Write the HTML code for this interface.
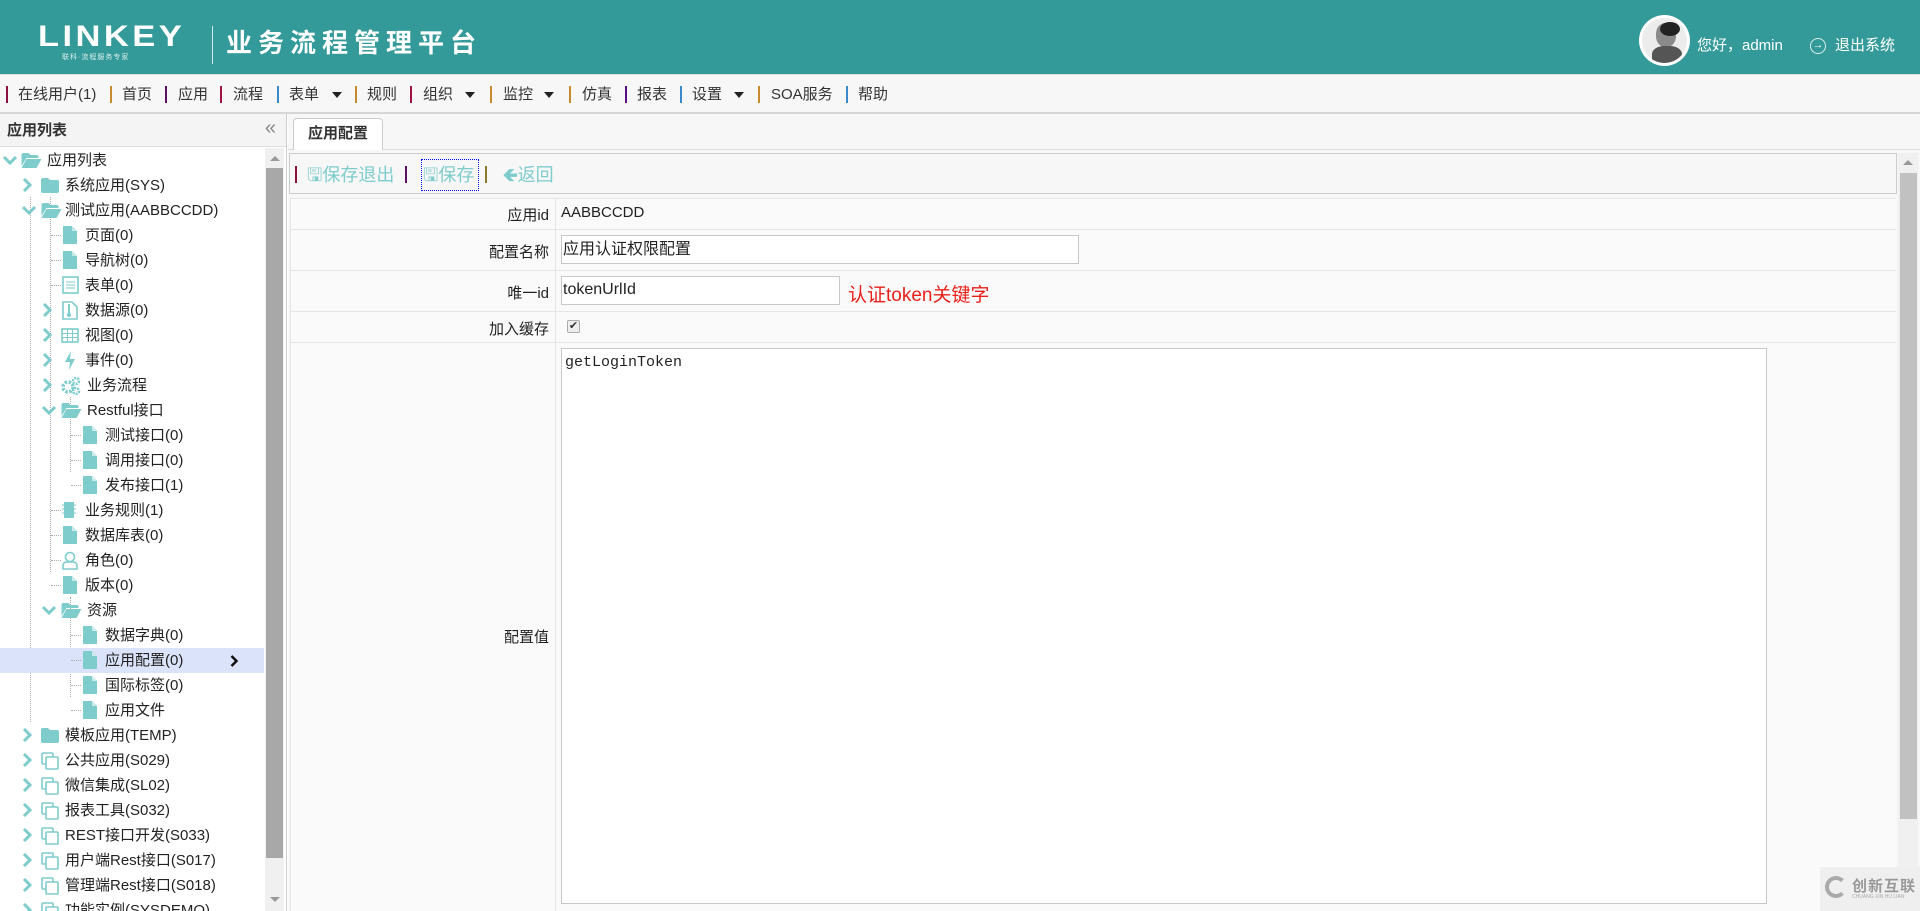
<!DOCTYPE html>
<html><head><meta charset="utf-8">
<style>
*{margin:0;padding:0;box-sizing:border-box}
body{width:1920px;height:911px;overflow:hidden;background:#fff;font-family:"Liberation Sans","Noto Sans CJK SC",sans-serif;color:#222;position:relative}
.abs{position:absolute}
#hdr{left:0;top:0;width:1920px;height:74px;background:#349a99}
#menu{left:0;top:74px;width:1920px;height:40px;background:#f7f7f7;border-top:1px solid #ddd;border-bottom:2px solid #d6d6d6}
.mi{position:absolute;top:10px;font-size:15px;color:#333;line-height:20px}
.sep{position:absolute;top:11px;width:2px;height:17px}
.car{position:absolute;top:17px;width:0;height:0;border-left:5px solid transparent;border-right:5px solid transparent;border-top:6px solid #222}
#side{left:0;top:114px;width:287px;height:797px;background:#fff;border-right:1px solid #ccc}
#sh{left:0;top:0;width:286px;height:33px;background:#f4f4f4;border-bottom:1px solid #ddd;font-weight:bold;font-size:15px;line-height:33px;padding-left:7px;color:#333}
.r{position:absolute;left:0;width:264px;height:25px;font-size:15px;line-height:25px;white-space:nowrap;color:#222}
.r span{position:absolute;top:0}
.r svg{position:absolute}
.vl{position:absolute;width:0;border-left:1px dotted #aaa}
.hl{position:absolute;height:0;width:10px;border-top:1px dotted #aaa;top:12px}
.lbl{position:absolute;left:290px;width:259px;text-align:right;font-size:15px;color:#222}
.tb{color:#7ecccc;font-size:18px;position:absolute;top:161px}
</style></head><body>
<svg width="0" height="0" style="position:absolute">
<defs>
<symbol id="file" viewBox="0 0 16 18"><path d="M1 0h9l5 5v13H1z" fill="#7ecccc"/><path d="M10 0v5h5" fill="#c8eaea"/></symbol>
<symbol id="fold" viewBox="0 0 18 15"><path d="M0 2q0-2 2-2h5l2 2h7q2 0 2 2v9q0 2-2 2H2q-2 0-2-2z" fill="#7ecccc"/></symbol>
<symbol id="ofold" viewBox="0 0 20 15"><path d="M0 2q0-2 2-2h5l2 2h6q2 0 2 2v1H5L0 13z" fill="#7ecccc"/><path d="M5 6h15l-5 9H0z" fill="#7ecccc"/></symbol>
<symbol id="copy" viewBox="0 0 18 18"><rect x="1" y="1" width="11" height="11" rx="1" fill="none" stroke="#7ecccc" stroke-width="1.6"/><rect x="5" y="5" width="12" height="12" rx="1" fill="#fff" stroke="#7ecccc" stroke-width="1.6"/></symbol>
<symbol id="chr" viewBox="0 0 10 14"><path d="M2 1l6 6-6 6" fill="none" stroke="#7ecccc" stroke-width="3"/></symbol>
<symbol id="chd" viewBox="0 0 14 10"><path d="M1 2l6 6 6-6" fill="none" stroke="#7ecccc" stroke-width="3"/></symbol>
</defs></svg>

<div id="hdr" class="abs">
  <div class="abs" style="left:38px;top:22px;color:#fff;font-size:30px;font-weight:bold;letter-spacing:3px;font-family:'Liberation Sans',sans-serif;transform:scaleX(1.15);transform-origin:left;line-height:30px">LINKEY</div>
  <div class="abs" style="left:62px;top:52px;color:#d8efef;font-size:7px;letter-spacing:1px">联科·流程服务专家</div>
  <div class="abs" style="left:212px;top:26px;width:1px;height:38px;background:#cfe9e9"></div>
  <div class="abs" style="left:226px;top:27px;color:#fff;font-size:26px;font-weight:bold;letter-spacing:6px;line-height:32px">业务流程管理平台</div>
  <div class="abs" style="left:1639px;top:15px;width:51px;height:51px;border-radius:50%;background:#fff;padding:3px"><div style="width:45px;height:45px;border-radius:50%;overflow:hidden;background:#ececec;position:relative"><div style="position:absolute;left:14px;top:5px;width:20px;height:24px;border-radius:45%;background:#8a8a8a"></div><div style="position:absolute;left:18px;top:4px;width:20px;height:14px;border-radius:50%;background:#222"></div><div style="position:absolute;left:10px;top:28px;width:30px;height:20px;border-radius:40% 40% 0 0;background:#555"></div></div></div>
  <div class="abs" style="left:1697px;top:34px;color:#fff;font-size:15px">您好，admin</div>
  <div class="abs" style="left:1810px;top:38px;width:16px;height:16px;border:1.5px solid #d8efef;border-radius:50%;color:#fff;font-size:11px;line-height:12px;text-align:center">→</div>
  <div class="abs" style="left:1835px;top:34px;color:#fff;font-size:15px">退出系统</div>
</div>

<div id="menu" class="abs">
  <div class="sep" style="left:6px;background:#8a1040"></div><div class="mi" style="left:18px">在线用户(1)</div>
  <div class="sep" style="left:110px;background:#c88a30"></div><div class="mi" style="left:122px">首页</div>
  <div class="sep" style="left:165px;background:#5a1060"></div><div class="mi" style="left:178px">应用</div>
  <div class="sep" style="left:220px;background:#a01040"></div><div class="mi" style="left:233px">流程</div>
  <div class="sep" style="left:277px;background:#3a8ac8"></div><div class="mi" style="left:289px">表单</div><div class="car" style="left:332px"></div>
  <div class="sep" style="left:355px;background:#c88a30"></div><div class="mi" style="left:367px">规则</div>
  <div class="sep" style="left:410px;background:#a01040"></div><div class="mi" style="left:423px">组织</div><div class="car" style="left:465px"></div>
  <div class="sep" style="left:490px;background:#c88a30"></div><div class="mi" style="left:503px">监控</div><div class="car" style="left:544px"></div>
  <div class="sep" style="left:569px;background:#c88a30"></div><div class="mi" style="left:582px">仿真</div>
  <div class="sep" style="left:625px;background:#5a1080"></div><div class="mi" style="left:637px">报表</div>
  <div class="sep" style="left:680px;background:#3a8ac8"></div><div class="mi" style="left:692px">设置</div><div class="car" style="left:734px"></div>
  <div class="sep" style="left:758px;background:#c88a30"></div><div class="mi" style="left:771px">SOA服务</div>
  <div class="sep" style="left:846px;background:#3a8ac8"></div><div class="mi" style="left:858px">帮助</div>
</div>

<div id="side" class="abs">
  <div id="sh" class="abs">应用列表<span style="position:absolute;right:10px;top:-2px;color:#888;font-weight:normal;font-size:20px">«</span></div>
</div>
<div class="abs" style="left:0;top:147px;width:287px;height:764px;overflow:hidden">
<div class="abs" style="left:0;top:0;width:287px;height:800px">
<div class="vl" style="left:30px;top:50px;height:525px"></div>
<div class="vl" style="left:50px;top:50px;height:375px"></div>
<div class="vl" style="left:70px;top:250px;height:75px"></div>
<div class="vl" style="left:70px;top:450px;height:100px"></div>
</div>
</div>
<div class="abs" style="left:0;top:0;width:264px;height:911px;overflow:hidden">
<div class="r" style="top:148px"><svg style="left:3px;top:7px" width="14" height="10"><use href="#chd"/></svg><svg style="left:21px;top:5px" width="21" height="15"><use href="#ofold"/></svg><span style="left:47px">应用列表</span></div>
<div class="r" style="top:173px"><svg style="left:22px;top:5px" width="10" height="14"><use href="#chr"/></svg><svg style="left:41px;top:5px" width="18" height="15"><use href="#fold"/></svg><span style="left:65px">系统应用(SYS)</span></div>
<div class="r" style="top:198px"><svg style="left:22px;top:7px" width="14" height="10"><use href="#chd"/></svg><svg style="left:41px;top:5px" width="21" height="15"><use href="#ofold"/></svg><span style="left:65px">测试应用(AABBCCDD)</span></div>
<div class="r" style="top:223px"><div class="hl" style="left:51px"></div><svg style="left:62px;top:3px" width="16" height="18"><use href="#file"/></svg><span style="left:85px">页面(0)</span></div>
<div class="r" style="top:248px"><div class="hl" style="left:51px"></div><svg style="left:62px;top:3px" width="16" height="18"><use href="#file"/></svg><span style="left:85px">导航树(0)</span></div>
<div class="r" style="top:273px"><div class="hl" style="left:51px"></div><svg style="left:62px;top:3px" width="17" height="18"><rect x="1" y="1" width="15" height="16" fill="none" stroke="#7ecccc" stroke-width="1.6"/><path d="M4 6h9M4 9h9M4 12h9" stroke="#7ecccc"/></svg><span style="left:85px">表单(0)</span></div>
<div class="r" style="top:298px"><svg style="left:42px;top:5px" width="10" height="14"><use href="#chr"/></svg><svg style="left:62px;top:3px" width="16" height="19"><path d="M1 1h9l5 5v12H1z" fill="none" stroke="#7ecccc" stroke-width="1.6"/><path d="M7 3v10" stroke="#7ecccc" stroke-width="2"/><circle cx="7" cy="14" r="2" fill="#7ecccc"/></svg><span style="left:85px">数据源(0)</span></div>
<div class="r" style="top:323px"><svg style="left:42px;top:5px" width="10" height="14"><use href="#chr"/></svg><svg style="left:61px;top:5px" width="18" height="15"><rect x="1" y="1" width="16" height="13" fill="none" stroke="#7ecccc" stroke-width="1.6"/><path d="M1 5.5h16M1 9.5h16M6.5 1v13M11.5 1v13" stroke="#7ecccc"/></svg><span style="left:85px">视图(0)</span></div>
<div class="r" style="top:348px"><svg style="left:42px;top:5px" width="10" height="14"><use href="#chr"/></svg><svg style="left:64px;top:3px" width="12" height="19"><path d="M7 0L1 11h5l-1 8 6-11H6z" fill="#7ecccc"/></svg><span style="left:85px">事件(0)</span></div>
<div class="r" style="top:373px"><svg style="left:42px;top:5px" width="10" height="14"><use href="#chr"/></svg><svg style="left:61px;top:3px" width="20" height="19"><circle cx="7" cy="11" r="5" fill="none" stroke="#7ecccc" stroke-width="3.5" stroke-dasharray="2.5 1.5"/><circle cx="15" cy="5" r="3" fill="none" stroke="#7ecccc" stroke-width="2.5" stroke-dasharray="2 1"/><circle cx="15" cy="15" r="3" fill="none" stroke="#7ecccc" stroke-width="2.5" stroke-dasharray="2 1"/></svg><span style="left:87px">业务流程</span></div>
<div class="r" style="top:398px"><svg style="left:42px;top:7px" width="14" height="10"><use href="#chd"/></svg><svg style="left:61px;top:5px" width="21" height="15"><use href="#ofold"/></svg><span style="left:87px">Restful接口</span></div>
<div class="r" style="top:423px"><div class="hl" style="left:71px"></div><svg style="left:82px;top:3px" width="16" height="18"><use href="#file"/></svg><span style="left:105px">测试接口(0)</span></div>
<div class="r" style="top:448px"><div class="hl" style="left:71px"></div><svg style="left:82px;top:3px" width="16" height="18"><use href="#file"/></svg><span style="left:105px">调用接口(0)</span></div>
<div class="r" style="top:473px"><div class="hl" style="left:71px"></div><svg style="left:82px;top:3px" width="16" height="18"><use href="#file"/></svg><span style="left:105px">发布接口(1)</span></div>
<div class="r" style="top:498px"><div class="hl" style="left:51px"></div><svg style="left:62px;top:3px" width="14" height="18"><rect x="2" y="1" width="10" height="16" fill="#7ecccc"/><path d="M0 4h2M0 8h2M0 12h2M12 4h2M12 8h2M12 12h2" stroke="#7ecccc"/></svg><span style="left:85px">业务规则(1)</span></div>
<div class="r" style="top:523px"><div class="hl" style="left:51px"></div><svg style="left:62px;top:3px" width="16" height="18"><use href="#file"/></svg><span style="left:85px">数据库表(0)</span></div>
<div class="r" style="top:548px"><div class="hl" style="left:51px"></div><svg style="left:62px;top:3px" width="16" height="19"><circle cx="8" cy="6" r="4.5" fill="none" stroke="#7ecccc" stroke-width="1.6"/><path d="M1 18v-3q0-4 4-4h6q4 0 4 4v3z" fill="none" stroke="#7ecccc" stroke-width="1.6"/></svg><span style="left:85px">角色(0)</span></div>
<div class="r" style="top:573px"><div class="hl" style="left:51px"></div><svg style="left:62px;top:3px" width="16" height="18"><use href="#file"/></svg><span style="left:85px">版本(0)</span></div>
<div class="r" style="top:598px"><svg style="left:42px;top:7px" width="14" height="10"><use href="#chd"/></svg><svg style="left:61px;top:5px" width="21" height="15"><use href="#ofold"/></svg><span style="left:87px">资源</span></div>
<div class="r" style="top:623px"><div class="hl" style="left:71px"></div><svg style="left:82px;top:3px" width="16" height="18"><use href="#file"/></svg><span style="left:105px">数据字典(0)</span></div>
<div class="r" style="top:648px;background:#dbe3fa"><div class="hl" style="left:71px"></div><svg style="left:82px;top:3px" width="16" height="18"><use href="#file"/></svg><span style="left:105px">应用配置(0)</span><svg style="left:230px;top:7px" width="9" height="12"><path d="M1.5 1l5 5-5 5" fill="none" stroke="#111" stroke-width="2.5"/></svg></div>
<div class="r" style="top:673px"><div class="hl" style="left:71px"></div><svg style="left:82px;top:3px" width="16" height="18"><use href="#file"/></svg><span style="left:105px">国际标签(0)</span></div>
<div class="r" style="top:698px"><div class="hl" style="left:71px"></div><svg style="left:82px;top:3px" width="16" height="18"><use href="#file"/></svg><span style="left:105px">应用文件</span></div>
<div class="r" style="top:723px"><svg style="left:22px;top:5px" width="10" height="14"><use href="#chr"/></svg><svg style="left:41px;top:5px" width="18" height="15"><use href="#fold"/></svg><span style="left:65px">模板应用(TEMP)</span></div>
<div class="r" style="top:748px"><svg style="left:22px;top:5px" width="10" height="14"><use href="#chr"/></svg><svg style="left:41px;top:4px" width="18" height="18"><use href="#copy"/></svg><span style="left:65px">公共应用(S029)</span></div>
<div class="r" style="top:773px"><svg style="left:22px;top:5px" width="10" height="14"><use href="#chr"/></svg><svg style="left:41px;top:4px" width="18" height="18"><use href="#copy"/></svg><span style="left:65px">微信集成(SL02)</span></div>
<div class="r" style="top:798px"><svg style="left:22px;top:5px" width="10" height="14"><use href="#chr"/></svg><svg style="left:41px;top:4px" width="18" height="18"><use href="#copy"/></svg><span style="left:65px">报表工具(S032)</span></div>
<div class="r" style="top:823px"><svg style="left:22px;top:5px" width="10" height="14"><use href="#chr"/></svg><svg style="left:41px;top:4px" width="18" height="18"><use href="#copy"/></svg><span style="left:65px">REST接口开发(S033)</span></div>
<div class="r" style="top:848px"><svg style="left:22px;top:5px" width="10" height="14"><use href="#chr"/></svg><svg style="left:41px;top:4px" width="18" height="18"><use href="#copy"/></svg><span style="left:65px">用户端Rest接口(S017)</span></div>
<div class="r" style="top:873px"><svg style="left:22px;top:5px" width="10" height="14"><use href="#chr"/></svg><svg style="left:41px;top:4px" width="18" height="18"><use href="#copy"/></svg><span style="left:65px">管理端Rest接口(S018)</span></div>
<div class="r" style="top:898px"><svg style="left:22px;top:5px" width="10" height="14"><use href="#chr"/></svg><svg style="left:41px;top:4px" width="18" height="18"><use href="#copy"/></svg><span style="left:65px">功能实例(SYSDEMO)</span></div>
</div>
<div class="abs" style="left:265px;top:148px;width:19px;height:763px;background:#f0f0f0"></div>
<div class="abs" style="left:270px;top:156px;width:0;height:0;border-left:5px solid transparent;border-right:5px solid transparent;border-bottom:5px solid #999"></div>
<div class="abs" style="left:266px;top:168px;width:17px;height:690px;background:#a8a8a8"></div>
<div class="abs" style="left:270px;top:897px;width:0;height:0;border-left:5px solid transparent;border-right:5px solid transparent;border-top:5px solid #999"></div>

<div class="abs" style="left:288px;top:114px;width:1632px;height:797px;background:#f7f7f7"></div>
<div class="abs" style="left:288px;top:149px;width:1632px;height:1px;background:#ddd"></div>
<div class="abs" style="left:293px;top:118px;width:90px;height:32px;background:#fff;border:1px solid #ccc;border-bottom:none;border-radius:4px 4px 0 0;font-weight:bold;font-size:15px;line-height:30px;text-align:center;color:#333">应用配置</div>
<div class="abs" style="left:289px;top:153px;width:1608px;height:41px;background:#f7f7f7;border:1px solid #ccc"></div>
<div class="abs" style="left:295px;top:166px;width:2px;height:17px;background:#8a1040"></div>
<div class="tb" style="left:307px">🖫保存退出</div>
<div class="abs" style="left:405px;top:166px;width:2px;height:17px;background:#5a1060"></div>
<div class="abs" style="left:421px;top:159px;width:58px;height:32px;border:1px dotted #00f"></div>
<div class="tb" style="left:423px">🖫保存</div>
<div class="abs" style="left:485px;top:166px;width:2px;height:17px;background:#8a7a30"></div>
<div class="tb" style="left:503px"><span style="font-weight:bold">🡸</span>返回</div>

<div class="abs" style="left:290px;top:198px;width:1606px;height:713px;background:#fafafa;border-top:1px solid #e5e5e5;border-left:1px solid #e5e5e5"></div>
<div class="abs" style="left:555px;top:198px;width:1px;height:713px;background:#e5e5e5"></div>
<div class="abs" style="left:290px;top:229px;width:1606px;height:1px;background:#e5e5e5"></div>
<div class="abs" style="left:290px;top:270px;width:1606px;height:1px;background:#e5e5e5"></div>
<div class="abs" style="left:290px;top:311px;width:1606px;height:1px;background:#e5e5e5"></div>
<div class="abs" style="left:290px;top:342px;width:1606px;height:1px;background:#e5e5e5"></div>
<div class="lbl" style="top:204px">应用id</div>
<div class="abs" style="left:561px;top:204px;font-size:15px">AABBCCDD</div>
<div class="lbl" style="top:241px">配置名称</div>
<div class="abs" style="left:561px;top:235px;width:518px;height:29px;background:#fff;border:1px solid #c8c8c8;font-size:16px;line-height:27px;padding-left:1px">应用认证权限配置</div>
<div class="lbl" style="top:282px">唯一id</div>
<div class="abs" style="left:561px;top:276px;width:279px;height:29px;background:#fff;border:1px solid #c8c8c8;font-size:16px;line-height:25px;padding-left:1px">tokenUrlId</div>
<div class="abs" style="left:848px;top:280px;font-size:19px;color:#e8201a">认证token关键字</div>
<div class="lbl" style="top:318px">加入缓存</div>
<div class="abs" style="left:567px;top:320px;width:13px;height:13px;border:1px solid #aaa;border-radius:2px;background:#eee;font-size:11px;line-height:11px;text-align:center;color:#333">✔</div>
<div class="lbl" style="top:626px">配置值</div>
<div class="abs" style="left:561px;top:348px;width:1206px;height:556px;background:#fff;border:1px solid #c8c8c8;font-family:'Liberation Mono',monospace;font-size:15px;padding:5px 3px">getLoginToken</div>

<div class="abs" style="left:1898px;top:153px;width:20px;height:758px;background:#f0f0f0"></div>
<div class="abs" style="left:1903px;top:160px;width:0;height:0;border-left:5px solid transparent;border-right:5px solid transparent;border-bottom:5px solid #999"></div>
<div class="abs" style="left:1900px;top:173px;width:17px;height:646px;background:#c1c1c1"></div>

<div class="abs" style="left:1820px;top:867px;width:100px;height:44px;background:#efefef"></div>
<div class="abs" style="left:1852px;top:875px;color:#999;font-size:15px;font-weight:bold;white-space:nowrap;letter-spacing:1px">创新互联</div>
<div class="abs" style="left:1852px;top:894px;color:#aaa;font-size:5px;white-space:nowrap">CHUANG XIN HU LIAN</div>
<div class="abs" style="left:1825px;top:876px;width:22px;height:22px;border-radius:50%;border:4px solid #aaa;border-right-color:transparent"></div>
</body></html>
